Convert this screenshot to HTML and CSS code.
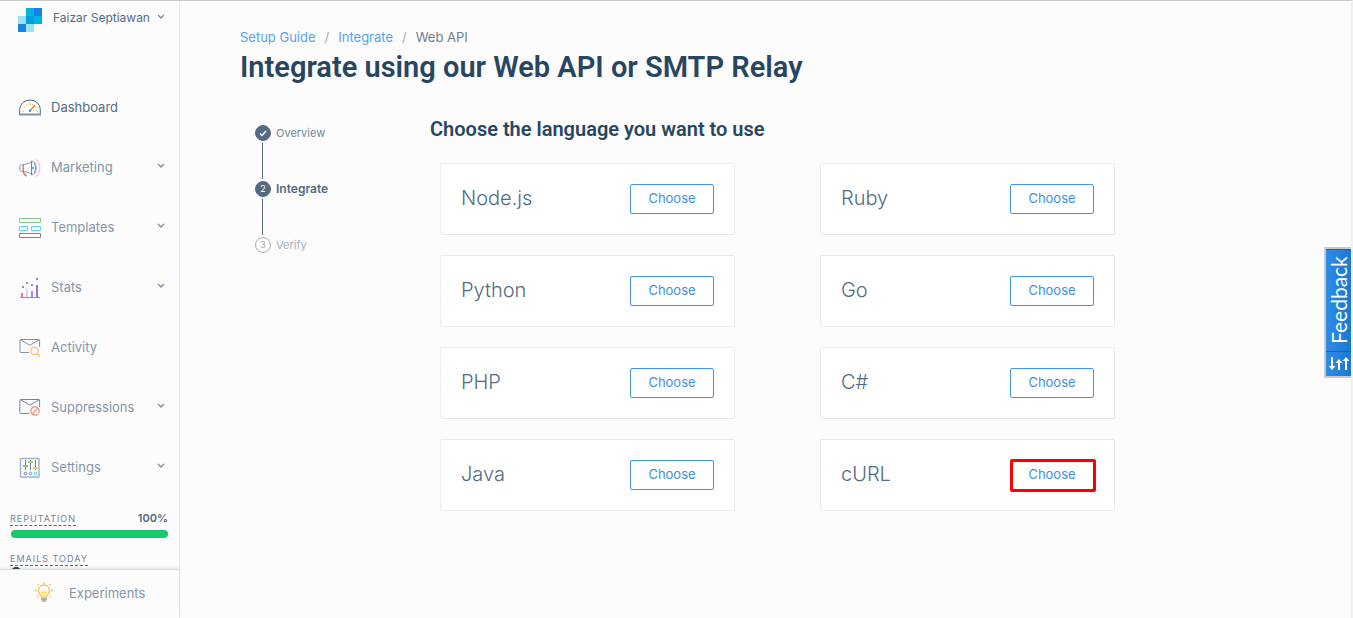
FILE: index.html
```html
<!DOCTYPE html>
<html lang="en">
<head>
<meta charset="utf-8">
<meta name="viewport" content="width=device-width, initial-scale=1">
<title>Integrate using our Web API or SMTP Relay</title>
<link rel="stylesheet" href="styles.css">
</head>
<body>
<div class="app">
  <aside class="sidebar">
    <div class="sidebar-body">
      <button class="account" type="button">
        <svg class="logo" width="24" height="24" viewBox="0 0 24 24" aria-hidden="true">
          <path fill="#99e1f4" d="M0 8h8v8H0zM8 16h8v8H8z"/>
          <path fill="#1a82e2" d="M0 16h8v8H0zM16 0h8v8h-8z"/>
          <path fill="#00b2e3" d="M8 0h8v8H8zM16 8h8v8h-8z"/>
          <path fill="#009dd9" d="M8 8h8v8H8z"/>
        </svg>
        <span class="account-name">Faizar Septiawan</span>
        <svg class="chevron" width="8" height="6" viewBox="0 0 8 6" aria-hidden="true"><path d="M1 1l3 3 3-3"/></svg>
      </button>
      <nav class="nav">
        <a class="nav-item active" href="#">
          <svg width="22" height="22" viewBox="0 0 22 22" fill="none" aria-hidden="true">
            <path stroke="#4f6880" d="M.7 17v-4.500a10.300 9.500 0 0 1 20.600 0V17"/>
            <path stroke="#8195a8" stroke-width="2" d="M0 17.500h22"/>
            <path stroke="#f8d64e" stroke-width="1.500" d="M3.500 14.200H5M17 14.200h1.800M4.500 9.600l1.300.6M7.300 7.300l.8.8M14.200 7.300l-.8.8M17.200 9.600l-1.200.6"/>
            <circle cx="11" cy="7" r="1.200" fill="#ffe13b"/>
            <path stroke="#ff6a3d" stroke-width="1.300" d="M11.500 13l4.500-4.500"/>
            <circle cx="11" cy="13.800" r="1.200" fill="#3e8eea"/>
          </svg>
          <span class="nav-label">Dashboard</span>
        </a>
        <a class="nav-item" href="#">
          <svg width="22" height="22" viewBox="0 0 22 22" fill="none" aria-hidden="true">
            <path stroke="#8a99aa" d="M12.500 4.500C10 7 6 7.500 3.500 7.500 1.500 7.500.6 9 .6 11s1 3.500 2.900 3.500c2.500 0 6.500.5 9 3"/>
            <path stroke="#718499" d="M12.500 4v14c2 0 4-3.500 4-7s-2-7-4-7z"/>
            <path stroke="#4aa6ee" stroke-width="1.500" d="M14 9.500v3"/>
            <path stroke="#d9695c" stroke-width="1.300" d="M4.200 8v6.500c.5 2 1.400 3.800 3.600 4.500"/>
            <path stroke="#b98ddd" d="M15.800 5.500c2 2.500 2 8.500 0 11"/>
            <path stroke="#ecc4f4" stroke-width="1.200" d="M17 2.500c5 4 5 13 0 17"/>
          </svg>
          <span class="nav-label">Marketing</span>
          <svg class="chevron" width="8" height="6" viewBox="0 0 8 6" aria-hidden="true"><path d="M1 1l3 3 3-3"/></svg>
        </a>
        <a class="nav-item" href="#">
          <svg width="22" height="22" viewBox="0 0 22 22" fill="none" aria-hidden="true">
            <path stroke="#86c98a" d="M.5 1.500h21v4H.5z"/>
            <path stroke="#5ed5e6" d="M.5 9.500h8v4h-8zM12.500 9.500h9v4h-9z"/>
            <path stroke="#72879b" d="M.5 16.500h21v4H.5z"/>
          </svg>
          <span class="nav-label">Templates</span>
          <svg class="chevron" width="8" height="6" viewBox="0 0 8 6" aria-hidden="true"><path d="M1 1l3 3 3-3"/></svg>
        </a>
        <a class="nav-item" href="#">
          <svg width="22" height="22" viewBox="0 0 22 22" aria-hidden="true">
            <path fill="#8797a8" d="M1 20h20v1H1zM3 9h2v2H3zM7 5h2v2H7zM12 7h2v2h-2zM17 1h2v2h-2z"/>
            <path fill="#fa6fa5" d="M2 16h2v4H2z"/><path fill="#ecc8f1" d="M7 12h2v8H7z"/>
            <path fill="#9d8cff" d="M12 14h2v6h-2z"/><path fill="#aa6cc4" d="M17 8h2v12h-2z"/>
          </svg>
          <span class="nav-label">Stats</span>
          <svg class="chevron" width="8" height="6" viewBox="0 0 8 6" aria-hidden="true"><path d="M1 1l3 3 3-3"/></svg>
        </a>
        <a class="nav-item" href="#">
          <svg width="22" height="22" viewBox="0 0 22 22" fill="none" aria-hidden="true">
            <path stroke="#8092a4" d="M10 15.500H2a1 1 0 0 1-1-1V3a.6.6 0 0 1 .6-.5H20a.6.6 0 0 1 .6.600V10M2 3l8.800 5.300L20 3"/>
            <circle cx="15.500" cy="14" r="3.700" stroke="#fdbf5c" stroke-width="1.200"/>
            <path stroke="#fdbf5c" stroke-width="1.300" d="M18 16.500l3 3"/>
          </svg>
          <span class="nav-label">Activity</span>
        </a>
        <a class="nav-item" href="#">
          <svg width="22" height="22" viewBox="0 0 22 22" fill="none" aria-hidden="true">
            <path stroke="#72879b" d="M10 16.500H1.500a.6.6 0 0 1-.6-.6V3a.6.6 0 0 1 .6-.5h18.600a.5.5 0 0 1 .5.500V10M2 3l8.800 5L20 3"/>
            <circle cx="16" cy="14" r="4.200" stroke="#f48b78" stroke-width="1.200"/>
            <path stroke="#f48b78" stroke-width="1.200" d="M13.200 16.800l5.600-5.600"/>
          </svg>
          <span class="nav-label">Suppressions</span>
          <svg class="chevron" width="8" height="6" viewBox="0 0 8 6" aria-hidden="true"><path d="M1 1l3 3 3-3"/></svg>
        </a>
        <a class="nav-item" href="#">
          <svg width="22" height="22" viewBox="0 0 22 22" fill="none" aria-hidden="true">
            <rect x="1.500" y="1.500" width="18.500" height="18.500" rx=".5" stroke="#a6b3c1" stroke-width="1.500"/>
            <path stroke="#6d8093" d="M6.500 3v10M11.500 3v10M16.500 3v10"/>
            <path stroke="#7fc97b" stroke-width="2" d="M4 9h5"/>
            <path stroke="#9fd56e" stroke-width="2" d="M9 5h5"/>
            <path stroke="#d5df5c" stroke-width="2" d="M14 11h5"/>
            <circle cx="6.500" cy="16.500" r="1.400" stroke="#7e7bc4"/>
            <circle cx="11.500" cy="16.500" r="1.400" stroke="#69a7e6"/>
            <circle cx="16.500" cy="16.500" r="1.400" stroke="#50cbe4"/>
          </svg>
          <span class="nav-label">Settings</span>
          <svg class="chevron" width="8" height="6" viewBox="0 0 8 6" aria-hidden="true"><path d="M1 1l3 3 3-3"/></svg>
        </a>
      </nav>
      <section class="usage">
        <div class="usage-row"><span class="usage-label">REPUTATION</span><strong class="usage-value">100%</strong></div>
        <div class="meter"><div class="meter-fill"></div></div>
        <div class="usage-row"><span class="usage-label">EMAILS TODAY</span></div>
        <strong class="usage-count">0</strong>
      </section>
    </div>
    <a class="experiments" href="#">
      <svg width="20" height="22" viewBox="0 0 20 22" fill="none" aria-hidden="true">
        <path stroke="#fbbd63" stroke-width="1.300" d="M7.500 15c0-2-3-3-3-6.500a5.500 5.500 0 0 1 11 0c0 3.500-3 4.500-3 6.500z"/>
        <path stroke="#fbbd63" stroke-width="1.300" d="M10 0v2M3.500 2l1.200 1.200M16.500 2l-1.200 1.200M1 8.500h2M17 8.500h2M3.500 15l1.200-1.200M16.500 15l-1.200-1.200"/>
        <path stroke="#ffe25b" stroke-width="1.500" d="M7 9.500l1.500 1.500L10 9.500l1.500 1.500L13 9.500M9 11.500V15M11 11.500V15"/>
        <path fill="#a7b1bc" d="M7 16h6v2.500h-1.500V20h-3v-1.500H7z"/>
      </svg>
      <span>Experiments</span>
    </a>
  </aside>
  <main class="main">
    <nav class="breadcrumb" aria-label="Breadcrumb">
      <a href="#">Setup Guide</a><span class="slash">/</span><a href="#">Integrate</a><span class="slash">/</span><span>Web API</span>
    </nav>
    <h1 class="title">Integrate using our Web API or SMTP Relay</h1>
    <div class="content">
      <ol class="steps">
        <li class="step done"><span class="dot"><svg width="8" height="8" viewBox="0 0 8 8" aria-hidden="true"><path d="M1 4.500l2 2L7 2"/></svg></span>Overview</li>
        <li class="step current"><span class="dot">2</span>Integrate</li>
        <li class="step"><span class="dot">3</span>Verify</li>
      </ol>
      <section class="languages">
        <h2 class="subtitle">Choose the language you want to use</h2>
        <div class="cards">
          <article class="card"><h3>Node.js</h3><button class="choose" type="button">Choose</button></article>
          <article class="card"><h3>Ruby</h3><button class="choose" type="button">Choose</button></article>
          <article class="card"><h3>Python</h3><button class="choose" type="button">Choose</button></article>
          <article class="card"><h3>Go</h3><button class="choose" type="button">Choose</button></article>
          <article class="card"><h3>PHP</h3><button class="choose" type="button">Choose</button></article>
          <article class="card"><h3>C#</h3><button class="choose" type="button">Choose</button></article>
          <article class="card"><h3>Java</h3><button class="choose" type="button">Choose</button></article>
          <article class="card"><h3>cURL</h3><button class="choose marked" type="button">Choose</button></article>
        </div>
      </section>
    </div>
  </main>
</div>
<button class="feedback" type="button">
  <span class="feedback-text">Feedback</span>
  <span class="feedback-icon">
    <svg width="20" height="14" viewBox="0 0 20 14" fill="#fff" aria-hidden="true">
      <path d="M2 0h2v9h2.500L3 13-.5 9H2zM9 13V6H6.500L10 2l3.500 4H11v7zM16 13V4h-2.500L17 0l3.500 4H18v9z"/>
    </svg>
  </span>
</button>
</body>
</html>
```
FILE: styles.css
```css
* { box-sizing: border-box; }
body {
  margin: 0;
  background: #fcfcfc;
  color: #546b81;
  font-family: Inter, Roboto, sans-serif;
  font-size: 13px;
  line-height: 20px;
}
a { color: inherit; text-decoration: none; }
button { font: inherit; color: inherit; cursor: pointer; }
h1, h2, h3, ol { margin: 0; padding: 0; }

.app {
  display: flex;
  height: 100vh;
  border-top: 1px solid #cbcbcb;
  border-right: 2px solid #f0f0f0;
}

.sidebar {
  display: flex;
  flex-direction: column;
  flex: 0 0 180px;
  border-right: 1px solid #e9ebed;
}
.sidebar-body { flex: 1; min-height: 0; padding-top: 1px; overflow: hidden; }
.account {
  display: flex;
  align-items: center;
  width: 100%;
  height: 36px;
  padding: 0 14px 0 18px;
  border: 0;
  background: none;
  font-size: 12px;
  text-align: left;
}
.account-name { flex: 1; margin-left: 11px; padding-bottom: 4px; }
.chevron { flex: none; fill: none; stroke: #7b8fa3; stroke-width: 1.3; margin-bottom: 4px; }
.account .chevron { margin-bottom: 6px; }
.nav { margin-top: 40px; }
.nav-item {
  display: flex;
  align-items: center;
  height: 60px;
  padding: 0 14px 0 19px;
  color: #8596a8;
}
.nav-item.active { color: #546b81; }
.nav-label { flex: 1; margin-left: 10px; padding-bottom: 2px; }

.usage { padding: 10px 11px 0 10px; }
.usage-row {
  display: flex;
  justify-content: space-between;
  align-items: flex-start;
  height: 20px;
}
.usage-label {
  margin-top: 5px;
  border-bottom: 1px dashed #546b81;
  color: #72869a;
  font-size: 9px;
  line-height: 12px;
  letter-spacing: 1px;
}
.usage-value { font-size: 11px; line-height: 20px; font-weight: 600; }
.meter { height: 8px; margin: 2px 0 10px 1px; border-radius: 4px; background: #e9ebed; }
.meter-fill { width: 100%; height: 100%; border-radius: 4px; background: #18c96b; }
.usage-count { display: block; font-size: 18px; color: #294661; line-height: 18px; margin-top: -3px; }
.experiments {
  display: flex;
  align-items: center;
  gap: 15px;
  height: 49px;
  padding: 0 0 2px 34px;
  border-top: 1px solid #dedfe1;
  box-shadow: 0 -1px 3px #0000001a;
  color: #8596a8;
}

.main { flex: 1; padding: 26px 58px 0 60px; }
.breadcrumb { display: flex; color: #6d7f91; }
.breadcrumb a { color: #55a3ee; }
.slash { padding: 0 9px; color: #a2abb4; }
.title {
  color: #294661;
  font-family: Roboto, sans-serif;
  font-size: 29px;
  line-height: 40px;
  font-weight: 600;
}
.content { display: flex; margin-top: 29px; }
.steps {
  flex: 0 0 190px;
  padding: 9px 0 0 15px;
  list-style: none;
  font-size: 11px;
}
.step {
  display: flex;
  align-items: center;
  gap: 5px;
  position: relative;
  height: 16px;
  margin-bottom: 40px;
  color: #a2b0bd;
}
.step.done { color: #72869a; }
.step.current { color: #546b81; font-size: 12px; font-weight: 600; }
.dot {
  display: flex;
  align-items: center;
  justify-content: center;
  width: 16px;
  height: 16px;
  border: 1px solid #a2b0bd;
  border-radius: 50%;
  font-size: 9px;
  font-weight: 400;
}
.dot svg { fill: none; stroke: #fff; stroke-width: 1.5; }
.done .dot, .current .dot { background: #546b81; border-color: #546b81; color: #fff; }
.step:not(:last-child)::after {
  content: "";
  position: absolute;
  left: 7px;
  top: 18px;
  width: 1px;
  height: 36px;
  background: #546b81;
}
.languages { flex: 1; max-width: 685px; }
.subtitle {
  color: #294661;
  font-family: Roboto, sans-serif;
  font-size: 20px;
  line-height: 26px;
  font-weight: 600;
}
.cards {
  display: grid;
  grid-template-columns: 1fr 1fr;
  gap: 20px 85px;
  padding: 21px 0 0 10px;
}
.card {
  display: flex;
  align-items: center;
  justify-content: space-between;
  height: 72px;
  padding: 0 20px;
  border: 1px solid #e9ecef;
  border-radius: 2px;
  background: #fff;
}
.card h3 { font-size: 20px; line-height: 28px; font-weight: 300; padding-bottom: 2px; }
.choose {
  position: relative;
  width: 84px;
  height: 30px;
  padding: 0 0 2px;
  border: 1px solid #4295e6;
  border-radius: 2px;
  background: #fff;
  color: #3d90e6;
}
.marked::after {
  content: "";
  position: absolute;
  inset: -2px -3px -3px -1px;
  border: 3px solid #f00;
  border-radius: 2px;
}

.feedback {
  position: fixed;
  right: 2px;
  top: 247px;
  display: flex;
  flex-direction: column;
  width: 27px;
  padding: 0;
  border: 2px solid #c9c9c9;
  border-right: 0;
  background: linear-gradient(90deg, #2d8ce8, #1b78d4);
  color: #fff;
}
.feedback-text {
  height: 102px;
  border-bottom: 1px solid #1766b6;
  font-family: Lato, sans-serif;
  font-size: 21px;
  line-height: 25px;
  text-align: center;
  writing-mode: vertical-rl;
  transform: rotate(180deg);
}
.feedback-icon { display: flex; align-items: center; justify-content: center; height: 25px; border-top: 1px solid #1766b6; }
```
